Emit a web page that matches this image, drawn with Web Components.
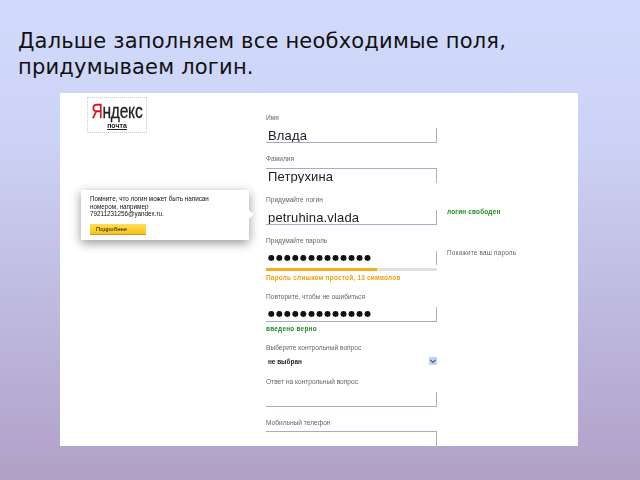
<!DOCTYPE html>
<html lang="ru">
<head>
<meta charset="utf-8">
<style>
  html, body { margin: 0; height: 100%; }
  body { overflow: hidden; }
</style>
</head>
<body>
<slide-page>
  <span slot="title">Дальше заполняем все необходимые поля, придумываем логин.</span>
  <shot-card>
    <form-field label="Имя" value="Влада"></form-field>
    <form-field label="Фамилия" value="Петрухина" top-line></form-field>
    <form-field label="Придумайте логин" value="petruhina.vlada" aside="логин свободен" aside-tone="ok"></form-field>
    <form-field label="Придумайте пароль" value="●●●●●●●●●●●●●" secret aside="Покажите ваш пароль" progress="65" note="Пароль слишком простой, 13 символов" note-tone="warn"></form-field>
    <form-field label="Повторите, чтобы не ошибиться" value="●●●●●●●●●●●●●" secret note="введено верно" note-tone="ok"></form-field>
    <select-field label="Выберите контрольный вопрос" value="не выбран"></select-field>
    <form-field label="Ответ на контрольный вопрос"></form-field>
    <form-field label="Мобильный телефон" top-line></form-field>
  </shot-card>
</slide-page>

<script>
class SlidePage extends HTMLElement {
  constructor() {
    super();
    this.attachShadow({ mode: 'open' }).innerHTML = `
      <style>
        :host {
          display: flex;
          flex-direction: column;
          width: 640px;
          height: 480px;
          box-sizing: border-box;
          padding: 28px 0 34px 60px;
          background: linear-gradient(180deg, #d2dbfd 0%, #ccd2f5 30%, #b0a0c6 100%);
          overflow: hidden;
        }
        .title {
          margin: 0 0 0 -42px;
          width: 510px;
          height: 65px;
          font: 21px/26px "DejaVu Sans", sans-serif;
          letter-spacing: 0.2px;
          color: #111;
        }
      </style>
      <div class="title"><slot name="title"></slot></div>
      <slot></slot>`;
  }
}

class ShotCard extends HTMLElement {
  constructor() {
    super();
    this.attachShadow({ mode: 'open' }).innerHTML = `
      <style>
        :host {
          display: block;
          position: relative;
          width: 518px;
          height: 353px;
          background: #fff;
          overflow: hidden;
        }
        .logo {
          position: absolute;
          left: 27px;
          top: 4px;
          width: 58px;
          height: 34px;
          border: 1px dotted #ccc;
          text-align: center;
          font-family: "Liberation Sans", sans-serif;
          filter: blur(.3px);
        }
        .brand {
          font-size: 20px;
          line-height: 20px;
          margin-top: 3px;
          letter-spacing: -0.3px;
          color: #222;
          -webkit-text-stroke: .3px #222;
          transform: translateX(-3px) scaleX(.78);
        }
        .brand b { color: #d8121c; font-weight: 400; -webkit-text-stroke: .3px #d8121c; }
        .sub { font-size: 7px; line-height: 8px; margin-top: 1px; color: #222; text-decoration: underline; font-weight: 700; }
        .tip {
          position: absolute;
          left: 21px;
          top: 97px;
          width: 168px;
          height: 50px;
          box-sizing: border-box;
          padding: 5px 9px;
          background: #fff;
          box-shadow: 0 3px 10px rgba(0,0,0,.42);
          font: 6.3px/7.5px "Liberation Sans", sans-serif;
          color: #111;
        }
        .tip::after {
          content: "";
          position: absolute;
          right: -3px;
          top: 21px;
          width: 7px;
          height: 7px;
          background: #fff;
          transform: rotate(45deg);
        }
        .tip p { margin: 0; filter: blur(.25px); }
        .tip .btn {
          display: block;
          width: 56px;
          height: 11px;
          margin-top: 6px;
          padding-left: 6px;
          box-sizing: border-box;
          background: linear-gradient(180deg, #ffdf55, #f8c21c);
          border-bottom: 1px solid #c79c1a;
          font-size: 6px;
          line-height: 10px;
          filter: blur(.2px);
        }
        .form {
          display: flex;
          flex-direction: column;
          width: 310px;
          margin-left: 206px;
          padding-top: 21px;
        }
      </style>
      <div class="logo">
        <div class="brand"><b>Я</b>ндекс</div>
        <div class="sub">почта</div>
      </div>
      <div class="form"><slot></slot></div>
      <div class="tip">
        <p>Помните, что логин может быть написан<br>номером, например<br>79211231256@yandex.ru.</p>
        <span class="btn">Подробнее</span>
      </div>`;
  }
}

class FormField extends HTMLElement {
  connectedCallback() {
    if (this.shadowRoot) return;
    const get = (n) => this.getAttribute(n);
    const progress = get('progress');
    this.attachShadow({ mode: 'open' }).innerHTML = `
      <style>
        :host {
          display: grid;
          grid-template-columns: 171px 1fr;
          column-gap: 10px;
          align-content: start;
          font-family: "Liberation Sans", sans-serif;
          height: 41px;
        }
        :host([progress]) { height: 56px; }
        :host([note]:not([progress])) { height: 51px; }
        :host(:last-child) { height: 30px; }
        .label {
          grid-column: 1 / 3;
          height: 14px;
          font-size: 6.6px;
          line-height: 8px;
          color: #666;
          filter: blur(.45px);
        }
        :host([top-line]) .label { height: 13px; }
        :host(:last-child) .label { height: 12px; }
        .box {
          height: 14px;
          border-right: 1px solid #a9b4c2;
          border-bottom: 1px solid #9fb0c6;
          font: 13px/16px "Liberation Sans", sans-serif;
          letter-spacing: .15px;
          padding-left: 2px;
          color: #222;
          white-space: nowrap;
          overflow: hidden;
          filter: blur(.25px);
        }
        :host([top-line]) .box { border-top: 1px solid #9fb0c6; border-bottom: 0; }
        .secret { font: 8px/14px "DejaVu Sans", sans-serif; letter-spacing: 1.05px; color: #111; }
        :host([progress]) .box { border-bottom: 0; }
        .aside {
          margin-top: -3px;
          font-size: 6.4px;
          line-height: 8px;
          padding-top: 1px;
          color: #666;
          letter-spacing: .2px;
          filter: blur(.4px);
          white-space: nowrap;
        }
        .ok { color: #1f8a1f; font-weight: 700; }
        .warn { color: #f0a010; font-weight: 700; }
        .bar { grid-column: 1; height: 3px; margin-top: 3px; background: #e0e0e0; }
        .bar i { display: block; height: 100%; background: #f6aa1e; }
        .note {
          grid-column: 1 / 3;
          margin-top: 3px;
          font-size: 6.4px;
          line-height: 8px;
          letter-spacing: .25px;
          filter: blur(.25px);
        }
      </style>
      <div class="label">${get('label') || ''}</div>
      <div class="box ${this.hasAttribute('secret') ? 'secret' : ''}">${get('value') || ''}</div>
      <div class="aside ${get('aside-tone') || ''}">${get('aside') || ''}</div>
      ${progress ? `<div class="bar"><i style="width:${progress}%"></i></div>` : ''}
      ${get('note') ? `<div class="note ${get('note-tone') || ''}">${get('note')}</div>` : ''}`;
  }
}

class SelectField extends HTMLElement {
  connectedCallback() {
    if (this.shadowRoot) return;
    this.attachShadow({ mode: 'open' }).innerHTML = `
      <style>
        :host {
          display: block;
          width: 171px;
          height: 34px;
          font-family: "Liberation Sans", sans-serif;
        }
        .label { height: 12px; font-size: 6.6px; line-height: 8px; color: #666; filter: blur(.45px); }
        .row { display: flex; align-items: center; justify-content: space-between; height: 10px; }
        .val { font-size: 6.4px; font-weight: 700; color: #222; padding-left: 2px; filter: blur(.3px); }
        .arrow { display: block; width: 8px; height: 8px; background: #c3d3ef; }
      </style>
      <div class="label">${this.getAttribute('label')}</div>
      <div class="row">
        <span class="val">${this.getAttribute('value')}</span>
        <svg class="arrow" viewBox="0 0 8 8"><path d="M1.5 3 L4 5.5 L6.5 3" fill="none" stroke="#4a5f8a" stroke-width="1.2"/></svg>
      </div>`;
  }
}

customElements.define('slide-page', SlidePage);
customElements.define('shot-card', ShotCard);
customElements.define('form-field', FormField);
customElements.define('select-field', SelectField);
</script>
</body>
</html>
